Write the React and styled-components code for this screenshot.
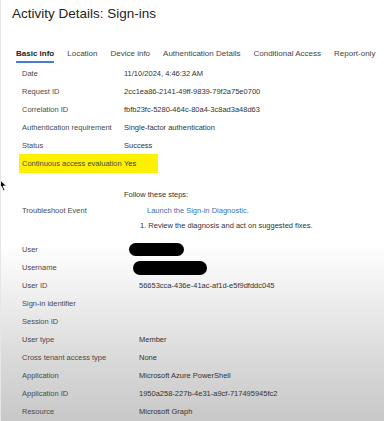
import styled, { createGlobalStyle } from 'styled-components';

const Global = createGlobalStyle`
  html, body {
    margin: 0;
    padding: 0;
  }
  body {
    font-family: 'Liberation Sans', Arial, sans-serif;
    background: #fff;
  }
`;

const Page = styled.div`
  position: relative;
  width: 384px;
  height: 421px;
  overflow: hidden;
  box-sizing: border-box;
  border-left: 1px solid #e6e6e6;
  background: linear-gradient(
    to bottom,
    #ffffff 0%,
    #ffffff 58%,
    #ececec 72%,
    #d6d6d6 88%,
    #c8c8c8 100%
  );
`;

const Title = styled.h1`
  margin: 4px 0 0 11px;
  font-size: 13.5px;
  line-height: 20px;
  font-weight: 400;
  color: #252423;
`;

const Tabs = styled.div`
  display: flex;
  gap: 13px;
  margin-top: 24px;
  padding-left: 15px;
`;

const Tab = styled.div`
  font-size: 8px;
  line-height: 12px;
  padding-bottom: 1px;
  color: ${(p) => (p.$active ? '#222' : '#444')};
  font-weight: ${(p) => (p.$active ? 600 : 400)};
  border-bottom: 2px solid ${(p) => (p.$active ? '#4a7bd0' : 'transparent')};
  white-space: nowrap;
`;

const Rows = styled.div`
  margin-top: 1px;
  padding-left: 18px;
  font-size: 7.5px;
`;

const Row = styled.div`
  display: grid;
  grid-template-columns: ${(p) => p.$labelWidth || 102}px 1fr;
  align-items: center;
  height: ${(p) => (p.$highlight ? 19 : 18)}px;
  padding-left: 3px;
  width: ${(p) => (p.$highlight ? '136px' : 'auto')};
  background: ${(p) => (p.$highlight ? '#fdf000' : 'transparent')};
`;

const Label = styled.span`
  color: #4a4a4a;
  white-space: nowrap;
`;

const Value = styled.span`
  color: #333;
  white-space: nowrap;
`;

const Troubleshoot = styled.div`
  display: grid;
  grid-template-columns: 102px 1fr;
  align-items: center;
  padding-left: 3px;
  margin-top: 14px;
  margin-bottom: 7px;
`;

const Steps = styled.div`
  display: flex;
  flex-direction: column;
  color: #333;
  line-height: 15.5px;
`;

const StepLine = styled.span`
  padding-left: ${(p) => p.$indent || 0}px;
  color: ${(p) => (p.$link ? '#3d6fb6' : '#333')};
  white-space: nowrap;
`;

const Redact = styled.span`
  display: block;
  width: ${(p) => p.$w}px;
  height: ${(p) => p.$h}px;
  margin-left: ${(p) => p.$shift}px;
  background: #000;
  border-radius: 7px;
`;

const Cursor = styled.svg`
  position: absolute;
  left: -3px;
  top: 178px;
`;

const tabs = [
  'Basic info',
  'Location',
  'Device info',
  'Authentication Details',
  'Conditional Access',
  'Report-only',
];

const top = [
  ['Date', '11/10/2024, 4:46:32 AM'],
  ['Request ID', '2cc1ea86-2141-49ff-9839-79f2a75e0700'],
  ['Correlation ID', 'fbfb23fc-5280-464c-80a4-3c8ad3a48d63'],
  ['Authentication requirement', 'Single-factor authentication'],
  ['Status', 'Success'],
];

const bottom = [
  ['User ID', '56653cca-436e-41ac-af1d-e5f9dfddc045'],
  ['Sign-in identifier', ''],
  ['Session ID', ''],
  ['User type', 'Member'],
  ['Cross tenant access type', 'None'],
  ['Application', 'Microsoft Azure PowerShell'],
  ['Application ID', '1950a258-227b-4e31-a9cf-717495945fc2'],
  ['Resource', 'Microsoft Graph'],
];

export default function App() {
  return (
    <Page>
      <Global />
      <Title>Activity Details: Sign-ins</Title>
      <Tabs>
        {tabs.map((t, i) => (
          <Tab key={t} $active={i === 0}>
            {t}
          </Tab>
        ))}
      </Tabs>
      <Rows>
        {top.map(([l, v]) => (
          <Row key={l}>
            <Label>{l}</Label>
            <Value>{v}</Value>
          </Row>
        ))}
        <Row $highlight>
          <Label>Continuous access evaluation</Label>
          <Value>Yes</Value>
        </Row>

        <Troubleshoot>
          <Label>Troubleshoot Event</Label>
          <Steps>
            <StepLine>Follow these steps:</StepLine>
            <StepLine $indent={23} $link>
              Launch the Sign-in Diagnostic.
            </StepLine>
            <StepLine $indent={16}>1. Review the diagnosis and act on suggested fixes.</StepLine>
          </Steps>
        </Troubleshoot>

        <Row $labelWidth={117}>
          <Label>User</Label>
          <Redact $w={55} $h={13} $shift={-10} />
        </Row>
        <Row $labelWidth={117}>
          <Label>Username</Label>
          <Redact $w={74} $h={14} $shift={-6} />
        </Row>
        {bottom.map(([l, v]) => (
          <Row key={l} $labelWidth={117}>
            <Label>{l}</Label>
            <Value>{v}</Value>
          </Row>
        ))}
      </Rows>
      <Cursor width="9" height="14" viewBox="0 0 9 14">
        <path d="M1 1 L1 11 L3.5 8.5 L5.5 13 L7 12.3 L5 8 L8.5 8 Z" fill="#000" stroke="#fff" strokeWidth="0.8" />
      </Cursor>
    </Page>
  );
}
